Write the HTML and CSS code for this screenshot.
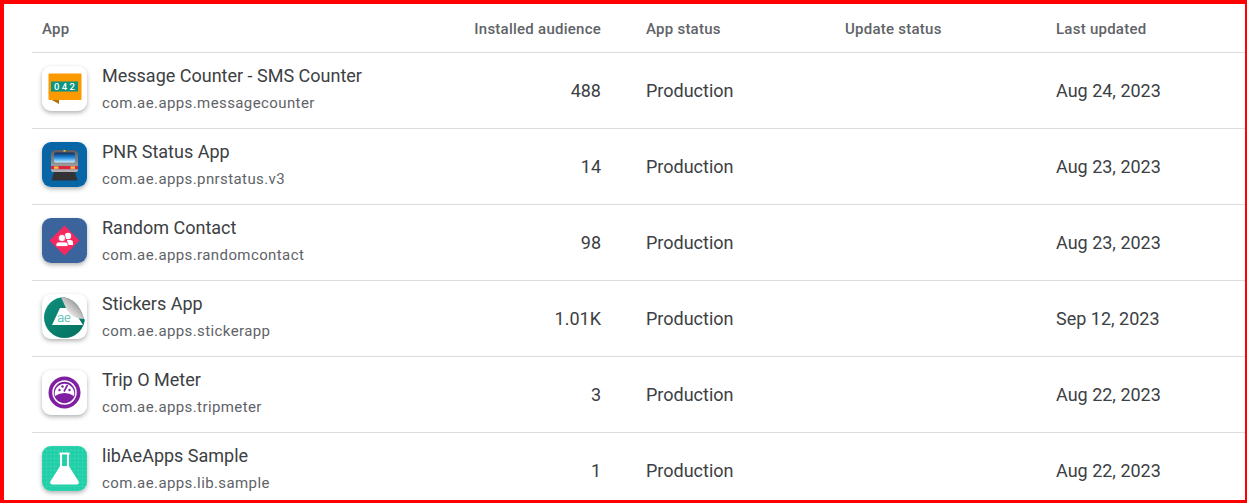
FILE: index.html
```html
<!DOCTYPE html>
<html lang="en">
<head>
    <meta charset="UTF-8">
    <title>All apps</title>
    <link rel="stylesheet" href="styles.css">
</head>
<body>
    <div class="frame">
        <div class="apps">
            <div class="row head">
                <div class="cell first">App</div>
                <div class="cell num">Installed audience</div>
                <div class="cell">App status</div>
                <div class="cell">Update status</div>
                <div class="cell">Last updated</div>
            </div>

            <div class="row">
                <div class="cell first app">
                    <div class="icon">
                        <svg viewBox="0 0 45 45" width="45" height="45">
                            <path d="M10 34h7v4z" fill="#b86f00"/>
                            <rect x="6.5" y="7.5" width="33" height="26.5" rx="1" fill="#fb9900"/>
                            <rect x="9" y="15.5" width="27" height="10" fill="#0b9481"/>
                            <text class="digits" x="22.5" y="24" text-anchor="middle">0 4 2</text>
                        </svg>
                    </div>
                    <div class="info">
                        <div class="name">Message Counter - SMS Counter</div>
                        <div class="pkg">com.ae.apps.messagecounter</div>
                    </div>
                </div>
                <div class="cell num">488</div>
                <div class="cell">Production</div>
                <div class="cell"></div>
                <div class="cell">Aug 24, 2023</div>
            </div>

            <div class="row">
                <div class="cell first app">
                    <div class="icon">
                        <svg viewBox="0 0 45 45" width="45" height="45">
                            <defs>
                                <linearGradient id="glass" x1="0" y1="0" x2="0" y2="1">
                                    <stop offset="0" stop-color="#0f2c58"/>
                                    <stop offset="0.5" stop-color="#1f8be0"/>
                                    <stop offset="1" stop-color="#cdeefa"/>
                                </linearGradient>
                                <linearGradient id="shell" x1="0" y1="0" x2="0" y2="1">
                                    <stop offset="0" stop-color="#5b5b60"/>
                                    <stop offset="1" stop-color="#b4b4b8"/>
                                </linearGradient>
                            </defs>
                            <rect width="45" height="45" fill="#0866a6"/>
                            <path d="M12 30h21l2.500 8.500h-26z" fill="#333336"/>
                            <path d="M9 13q0-5 5-5h17q5 0 5 5v15q0 2-2 2H11q-2 0-2-2z" fill="url(#shell)"/>
                            <rect x="12" y="10.500" width="21" height="10" rx="1.500" fill="url(#glass)"/>
                            <rect x="9" y="24" width="27" height="3.200" fill="#d8293c"/>
                            <rect x="12" y="24.400" width="4.500" height="2.400" fill="#f6c445"/>
                            <rect x="28.500" y="24.400" width="4.500" height="2.400" fill="#f6c445"/>
                            <rect x="21.500" y="8" width="2" height="1.600" fill="#f6c445"/>
                        </svg>
                    </div>
                    <div class="info">
                        <div class="name">PNR Status App</div>
                        <div class="pkg">com.ae.apps.pnrstatus.v3</div>
                    </div>
                </div>
                <div class="cell num">14</div>
                <div class="cell">Production</div>
                <div class="cell"></div>
                <div class="cell">Aug 23, 2023</div>
            </div>

            <div class="row">
                <div class="cell first app">
                    <div class="icon">
                        <svg viewBox="0 0 45 45" width="45" height="45">
                            <rect width="45" height="45" fill="#3b639c"/>
                            <path d="M22.500 7.500L37.500 22.500 22.500 37.500 7.500 22.500z" fill="#f7275f"/>
                            <circle cx="26" cy="18" r="3.200" fill="#fff"/>
                            <path d="M25 22h3.500q2.500 0 2.500 2.500V27h-5z" fill="#fff"/>
                            <circle cx="20" cy="20" r="3.600" fill="#fff" stroke="#f7275f" stroke-width="0.800"/>
                            <path d="M14 28.500v-2q0-2.500 2.500-2.500h7q2.500 0 2.500 2.500v2z" fill="#fff" stroke="#f7275f" stroke-width="0.800"/>
                        </svg>
                    </div>
                    <div class="info">
                        <div class="name">Random Contact</div>
                        <div class="pkg">com.ae.apps.randomcontact</div>
                    </div>
                </div>
                <div class="cell num">98</div>
                <div class="cell">Production</div>
                <div class="cell"></div>
                <div class="cell">Aug 23, 2023</div>
            </div>

            <div class="row">
                <div class="cell first app">
                    <div class="icon">
                        <svg viewBox="0 0 45 45" width="45" height="45">
                            <defs>
                                <linearGradient id="peel" x1="0" y1="1" x2="1" y2="0">
                                    <stop offset="0.2" stop-color="#fafafa"/>
                                    <stop offset="0.9" stop-color="#7a7a7a"/>
                                </linearGradient>
                                <linearGradient id="sticker" x1="0" y1="0" x2="1" y2="1">
                                    <stop offset="0" stop-color="#0f8f7e"/>
                                    <stop offset="1" stop-color="#05705f"/>
                                </linearGradient>
                            </defs>
                            <circle cx="22.500" cy="23.500" r="20.500" fill="url(#sticker)"/>
                            <path d="M18 14h12l11 17H10z" fill="#fff"/>
                            <path d="M19 0H45V27L42 25Q36 4 19 3z" fill="#fff"/>
                            <path d="M19 3Q36 4 42 25 31 25 25 16 22 10 19 3z" fill="url(#peel)"/>
                            <text class="logo" x="22" y="27.500" text-anchor="middle">ae</text>
                        </svg>
                    </div>
                    <div class="info">
                        <div class="name">Stickers App</div>
                        <div class="pkg">com.ae.apps.stickerapp</div>
                    </div>
                </div>
                <div class="cell num">1.01K</div>
                <div class="cell">Production</div>
                <div class="cell"></div>
                <div class="cell">Sep 12, 2023</div>
            </div>

            <div class="row">
                <div class="cell first app">
                    <div class="icon">
                        <svg viewBox="0 0 45 45" width="45" height="45">
                            <circle cx="22.500" cy="22.500" r="16" fill="#7f1fa2"/>
                            <circle cx="22.500" cy="22.500" r="11.500" fill="none" stroke="#fff" stroke-width="1.500"/>
                            <path d="M13 26a9.800 9.800 0 1 1 19 0q-4.500-3-9.500-3T13 26z" fill="#fff"/>
                            <circle cx="17.500" cy="20" r="1.200" fill="#7f1fa2"/>
                            <circle cx="20.500" cy="16.500" r="1.200" fill="#7f1fa2"/>
                            <circle cx="27.500" cy="20" r="1.200" fill="#7f1fa2"/>
                            <path d="M22 21.500L25.500 15" stroke="#7f1fa2" stroke-width="1.600"/>
                        </svg>
                    </div>
                    <div class="info">
                        <div class="name">Trip O Meter</div>
                        <div class="pkg">com.ae.apps.tripmeter</div>
                    </div>
                </div>
                <div class="cell num">3</div>
                <div class="cell">Production</div>
                <div class="cell"></div>
                <div class="cell">Aug 22, 2023</div>
            </div>

            <div class="row">
                <div class="cell first app">
                    <div class="icon">
                        <svg viewBox="0 0 45 45" width="45" height="45">
                            <defs>
                                <pattern id="paper" width="4" height="4" patternUnits="userSpaceOnUse">
                                    <path d="M4 0H0V4" fill="none" stroke="#4fdcbc" stroke-width="0.600"/>
                                </pattern>
                            </defs>
                            <rect width="45" height="45" fill="#1fcfa8"/>
                            <rect width="45" height="45" fill="url(#paper)"/>
                            <path d="M17.500 7.500h10M19 7.500v13L9.500 35.500q-1 2 1 2h24q2 0 1-2L26 20.500v-13" fill="none" stroke="#fff" stroke-width="2" stroke-linejoin="round"/>
                            <path d="M19 20h7l9.500 15.500q1 2-1 2h-24q-2 0-1-2z" fill="#fff"/>
                        </svg>
                    </div>
                    <div class="info">
                        <div class="name">libAeApps Sample</div>
                        <div class="pkg">com.ae.apps.lib.sample</div>
                    </div>
                </div>
                <div class="cell num">1</div>
                <div class="cell">Production</div>
                <div class="cell"></div>
                <div class="cell">Aug 22, 2023</div>
            </div>
        </div>
    </div>
</body>
</html>
```

FILE: styles.css
```css
* {
    box-sizing: border-box;
}
body {
    margin: 0;
    background: #fff;
    font-family: Roboto, "Liberation Sans", sans-serif;
}
.frame {
    height: 503px;
    border-style: solid;
    border-color: #f00;
    border-width: 4px 2px 3px 4px;
    padding-left: 28px;
    overflow: hidden;
}
.row {
    display: grid;
    grid-template-columns: 400px 214px 199px 211px 1fr;
    height: 76px;
    border-bottom: 1px solid #dadce0;
    font-size: 18px;
    color: #3c4043;
}
.row.head {
    height: 49px;
    padding-top: 2px;
    font-size: 15px;
    font-weight: 500;
    letter-spacing: 0.25px;
    color: #5f6368;
}
.cell {
    display: flex;
    align-items: center;
}
.first {
    padding-left: 10px;
}
.num {
    justify-content: flex-end;
    padding-right: 45px;
}
.app {
    align-items: flex-start;
    padding-top: 13px;
}
.icon {
    flex: none;
    width: 45px;
    height: 45px;
    border-radius: 9px;
    overflow: hidden;
    background: #fff;
    box-shadow: 0 2px 4px rgba(60, 64, 67, .4);
}
.icon svg {
    display: block;
}
.info {
    margin-left: 15px;
}
.name {
    height: 23px;
    line-height: 20px;
    font-size: 18px;
}
.pkg {
    margin-top: 4px;
    line-height: 20px;
    font-size: 15px;
    letter-spacing: 0.4px;
    color: #5f6368;
}
.digits {
    font-family: Roboto, sans-serif;
    font-size: 9.500px;
    font-weight: 500;
    fill: #fff;
}
.logo {
    font-family: Roboto, sans-serif;
    font-size: 13px;
    font-weight: 300;
    fill: #2bb5a5;
}
```
